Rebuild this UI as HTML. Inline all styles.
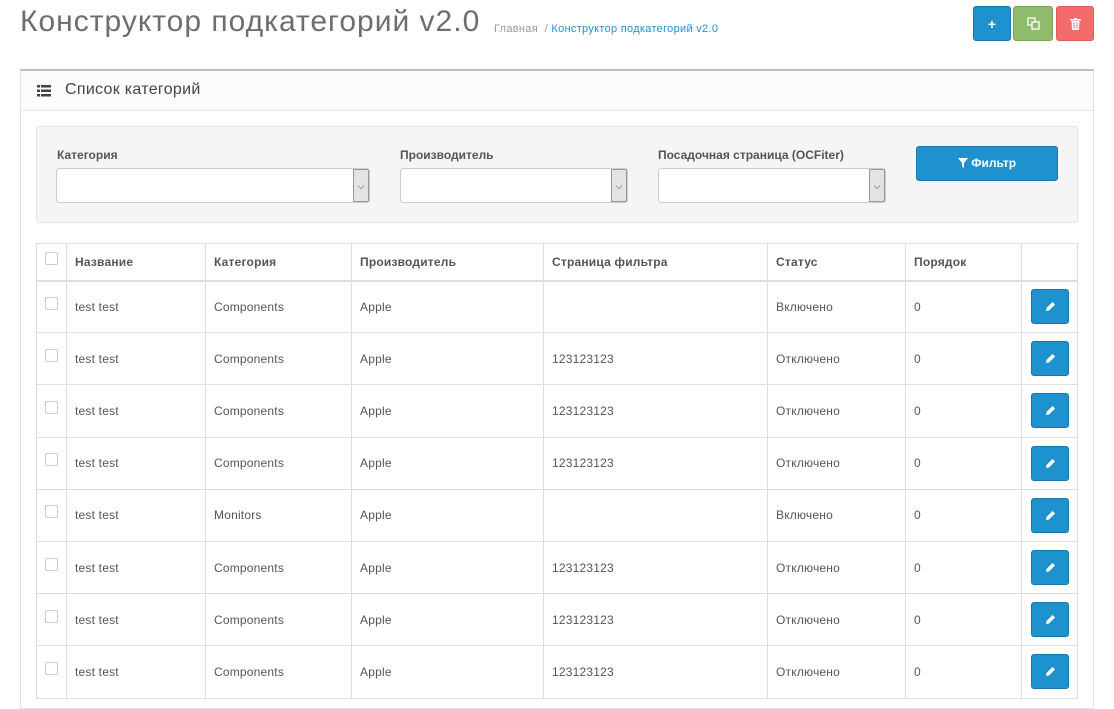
<!DOCTYPE html>
<html><head><meta charset="utf-8"><style>
*{box-sizing:border-box;margin:0;padding:0}
body{width:1114px;height:694px;overflow:hidden;background:#fff;font-family:"Liberation Sans",sans-serif;font-size:12px;color:#666;position:relative}
.abs{position:absolute}
h1{position:absolute;left:20px;top:5px;font-size:30px;font-weight:normal;color:#6d6d6d;letter-spacing:1px;white-space:nowrap}
.bc{position:absolute;left:494px;top:23px;font-size:11px;color:#999;letter-spacing:0.3px;white-space:nowrap}
.bc a{color:#1e91cf}
.btn{position:absolute;top:6px;height:35px;border-radius:3px;color:#fff;display:flex;align-items:center;justify-content:center;font-size:14px;font-weight:bold}
.panel{position:absolute;left:20px;top:69px;width:1074px;height:640px;border:1px solid #e1e1e1;border-top:2px solid #bfbfbf}
.ph{height:40px;background:#fcfcfc;border-bottom:1px solid #e8e8e8;font-size:16px;color:#444;padding:10px 0 0 44px;position:relative;letter-spacing:0.3px}
.well{position:absolute;left:36px;top:126px;width:1042px;height:97px;background:#f5f5f5;border:1px solid #e3e3e3;border-radius:3px}
.lbl{position:absolute;top:148px;font-weight:bold;font-size:12px;color:#555}
.sel{position:absolute;top:168px;height:35px;border:1px solid #ccc;border-radius:3px;background:#fff}
.sel i{position:absolute;right:0;top:0;width:16px;height:33px;background:#e3e3e3;border:1px solid #999;border-radius:0 2px 2px 0;font-style:normal;font-size:9px;text-align:center;line-height:33px;color:#333}
table{position:absolute;left:36px;top:243px;width:1042px;border-collapse:collapse}
td,th{border:1px solid #ddd;text-align:left;padding:0 8px;font-size:12px;color:#555;letter-spacing:0.2px}
th{height:37px;font-weight:bold;color:#555;border-bottom:2px solid #ddd}
td{height:52.2px}
.cb{display:inline-block;width:13px;height:13px;border:1px solid #ccc;border-radius:2px;background:#fff;position:relative;top:-2px}
.eb{display:inline-flex;align-items:center;justify-content:center;width:38px;height:35px;background:#1e91cf;border:1px solid #1978ab;border-radius:3px;margin-left:1px}
</style></head><body>
<h1>Конструктор подкатегорий v2.0</h1>
<div class="bc">Главная &nbsp;/ <a>Конструктор подкатегорий v2.0</a></div>
<div class="btn" style="left:973px;width:38px;background:#1e91cf;border:1px solid #1978ab">+</div>
<div class="btn" style="left:1013px;width:40px;background:#8fbb6c;border:1px solid #7aa65a"><svg width="13" height="13" viewBox="0 0 13 13" fill="none" stroke="#fff" stroke-width="1.3"><rect x="1" y="1" width="7" height="7"/><rect x="5" y="5" width="7" height="7" fill="#8fbb6c"/></svg></div>
<div class="btn" style="left:1056px;width:38px;background:#f56b6b;border:1px solid #e05a5a"><svg width="11" height="12" viewBox="0 0 11 12" fill="#fff"><rect x="0" y="1" width="11" height="1.5"/><rect x="4" y="0" width="3" height="1.5"/><path d="M1.5 3h8l-.6 9h-6.8z"/><rect x="3.5" y="4.5" width="1" height="6" fill="#f56b6b"/><rect x="6.5" y="4.5" width="1" height="6" fill="#f56b6b"/></svg></div>
<div class="panel"><div class="ph"><svg class="abs" style="left:16px;top:14px" width="14" height="12" viewBox="0 0 14 12" fill="#444"><rect x="0" y="0" width="3" height="2.5"/><rect x="4" y="0" width="10" height="2.5"/><rect x="0" y="4.5" width="3" height="2.5"/><rect x="4" y="4.5" width="10" height="2.5"/><rect x="0" y="9" width="3" height="2.5"/><rect x="4" y="9" width="10" height="2.5"/></svg>Список категорий</div></div>
<div class="well"></div>
<div class="lbl" style="left:57px">Категория</div>
<div class="lbl" style="left:400px">Производитель</div>
<div class="lbl" style="left:658px">Посадочная страница (OCFiter)</div>
<div class="sel" style="left:56px;width:314px"><i>⌵</i></div>
<div class="sel" style="left:400px;width:228px"><i>⌵</i></div>
<div class="sel" style="left:658px;width:228px"><i>⌵</i></div>
<div class="abs" style="left:916px;top:146px;width:142px;height:35px;background:#1e91cf;border:1px solid #1978ab;border-radius:3px;color:#fff;font-weight:bold;text-align:center;line-height:33px"><svg width="10" height="10" viewBox="0 0 10 10" fill="#fff" style="vertical-align:-1px"><path d="M0 0h10L6 5v5L4 8.5V5z"/></svg> Фильтр</div>
<table>
<tr><th style="width:30px"><span class="cb"></span></th><th style="width:139px">Название</th><th style="width:146px">Категория</th><th style="width:192px">Производитель</th><th style="width:224px">Страница фильтра</th><th style="width:138px">Статус</th><th style="width:116px">Порядок</th><th></th></tr>
<tr><td><span class="cb"></span></td><td>test test</td><td>Components</td><td>Apple</td><td></td><td>Включено</td><td>0</td><td><span class="eb"><svg width="11" height="11" viewBox="0 0 11 11" fill="#fff"><path d="M7.5 1l2.5 2.5-6 6L1 10l.5-3z"/></svg></span></td></tr>
<tr><td><span class="cb"></span></td><td>test test</td><td>Components</td><td>Apple</td><td>123123123</td><td>Отключено</td><td>0</td><td><span class="eb"><svg width="11" height="11" viewBox="0 0 11 11" fill="#fff"><path d="M7.5 1l2.5 2.5-6 6L1 10l.5-3z"/></svg></span></td></tr>
<tr><td><span class="cb"></span></td><td>test test</td><td>Components</td><td>Apple</td><td>123123123</td><td>Отключено</td><td>0</td><td><span class="eb"><svg width="11" height="11" viewBox="0 0 11 11" fill="#fff"><path d="M7.5 1l2.5 2.5-6 6L1 10l.5-3z"/></svg></span></td></tr>
<tr><td><span class="cb"></span></td><td>test test</td><td>Components</td><td>Apple</td><td>123123123</td><td>Отключено</td><td>0</td><td><span class="eb"><svg width="11" height="11" viewBox="0 0 11 11" fill="#fff"><path d="M7.5 1l2.5 2.5-6 6L1 10l.5-3z"/></svg></span></td></tr>
<tr><td><span class="cb"></span></td><td>test test</td><td>Monitors</td><td>Apple</td><td></td><td>Включено</td><td>0</td><td><span class="eb"><svg width="11" height="11" viewBox="0 0 11 11" fill="#fff"><path d="M7.5 1l2.5 2.5-6 6L1 10l.5-3z"/></svg></span></td></tr>
<tr><td><span class="cb"></span></td><td>test test</td><td>Components</td><td>Apple</td><td>123123123</td><td>Отключено</td><td>0</td><td><span class="eb"><svg width="11" height="11" viewBox="0 0 11 11" fill="#fff"><path d="M7.5 1l2.5 2.5-6 6L1 10l.5-3z"/></svg></span></td></tr>
<tr><td><span class="cb"></span></td><td>test test</td><td>Components</td><td>Apple</td><td>123123123</td><td>Отключено</td><td>0</td><td><span class="eb"><svg width="11" height="11" viewBox="0 0 11 11" fill="#fff"><path d="M7.5 1l2.5 2.5-6 6L1 10l.5-3z"/></svg></span></td></tr>
<tr><td><span class="cb"></span></td><td>test test</td><td>Components</td><td>Apple</td><td>123123123</td><td>Отключено</td><td>0</td><td><span class="eb"><svg width="11" height="11" viewBox="0 0 11 11" fill="#fff"><path d="M7.5 1l2.5 2.5-6 6L1 10l.5-3z"/></svg></span></td></tr>
</table>
</body></html>
